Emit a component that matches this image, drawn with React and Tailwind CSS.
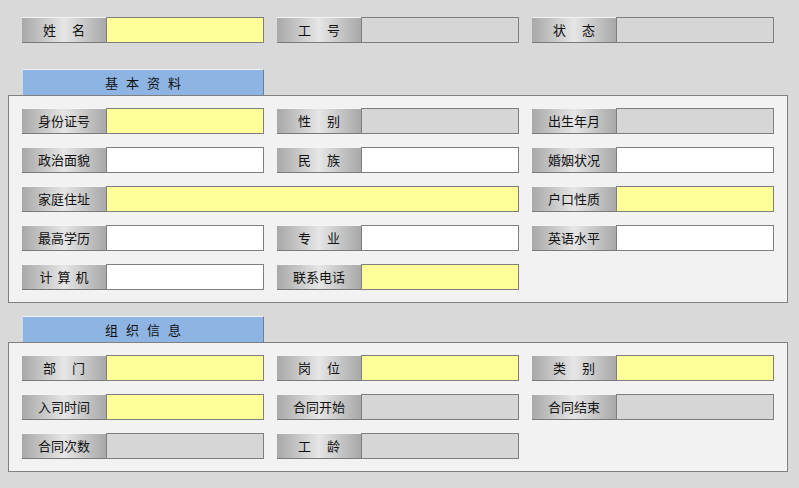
const FONT = { fontFamily: '"Noto Sans CJK SC", "Microsoft YaHei", sans-serif' }

const fill = {
  y: 'bg-[#ffff99]',
  g: 'bg-[#d6d6d6]',
  w: 'bg-white',
}

// 两字标签中间留宽空，三字标签留小空，四字不留
const gapFor = (n) => (n === 2 ? 'gap-[16px]' : n === 3 ? 'gap-[5px]' : 'gap-0')

function Field({ label, tone, span }) {
  const chars = [...label]
  return (
    <div className={`flex h-[26px] ${span ? 'col-span-2' : ''}`}>
      <div className={`w-[84px] shrink-0 flex items-center justify-center border-t border-t-[#f4f4f4] border-b border-b-[#7a7a7a] bg-gradient-to-r from-[#a8a8a8] via-[#e6e6e6] to-[#a8a8a8] text-[13px] text-[#111] ${gapFor(chars.length)}`}>
        {chars.map((c, i) => <span key={i}>{c}</span>)}
      </div>
      <div className={`flex-1 border border-[#7f7f7f] ${fill[tone]}`} />
    </div>
  )
}

function Tab({ title }) {
  return (
    <div className="ml-[22px] w-[242px] h-[26px] flex items-center justify-center gap-[8px] bg-[#8db4e2] border-t border-t-[#eef3fa] border-l border-l-[#c9d9ee] border-r border-r-[#6f7f92] text-[13px] text-[#111]">
      {[...title].map((c, i) => <span key={i}>{c}</span>)}
    </div>
  )
}

function Panel({ children }) {
  return (
    <div className="ml-[8px] w-[780px] border border-[#808080] bg-[#f2f2f2] px-[13px] py-[12px] grid grid-cols-[242px_242px_242px] gap-[13px]">
      {children}
    </div>
  )
}

export default function App() {
  return (
    <div className="w-[799px] h-[488px] bg-[#d9d9d9] pt-[17px]" style={FONT}>
      <div className="ml-[22px] grid grid-cols-[242px_242px_242px] gap-[13px]">
        <Field label="姓名" tone="y" />
        <Field label="工号" tone="g" />
        <Field label="状态" tone="g" />
      </div>

      <div className="mt-[26px]">
        <Tab title="基本资料" />
        <Panel>
          <Field label="身份证号" tone="y" />
          <Field label="性别" tone="g" />
          <Field label="出生年月" tone="g" />
          <Field label="政治面貌" tone="w" />
          <Field label="民族" tone="w" />
          <Field label="婚姻状况" tone="w" />
          <Field label="家庭住址" tone="y" span />
          <Field label="户口性质" tone="y" />
          <Field label="最高学历" tone="w" />
          <Field label="专业" tone="w" />
          <Field label="英语水平" tone="w" />
          <Field label="计算机" tone="w" />
          <Field label="联系电话" tone="y" />
        </Panel>
      </div>

      <div className="mt-[13px]">
        <Tab title="组织信息" />
        <Panel>
          <Field label="部门" tone="y" />
          <Field label="岗位" tone="y" />
          <Field label="类别" tone="y" />
          <Field label="入司时间" tone="y" />
          <Field label="合同开始" tone="g" />
          <Field label="合同结束" tone="g" />
          <Field label="合同次数" tone="g" />
          <Field label="工龄" tone="g" />
        </Panel>
      </div>
    </div>
  )
}
